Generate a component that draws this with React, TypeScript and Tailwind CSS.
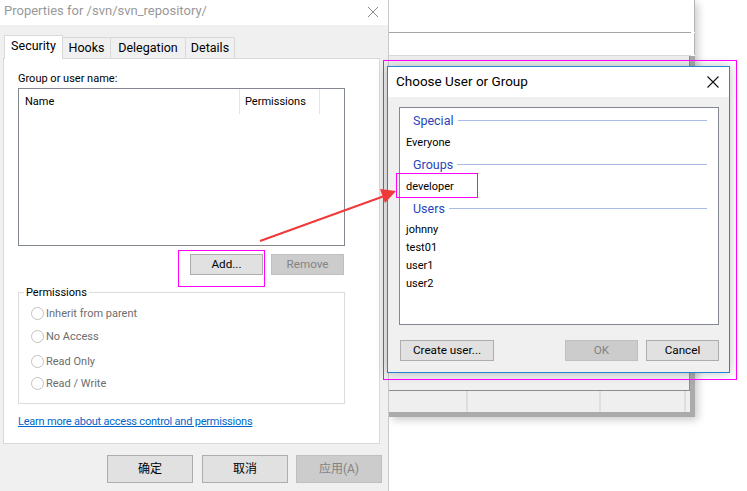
import React from "react";

const F = "font-['Roboto','Noto_Sans_CJK_SC',sans-serif]";

function WinButton({ label, w, h, disabled, cjk }: { label: string; w: string; h: string; disabled?: boolean; cjk?: boolean }) {
  return (
    <div
      className={`${w} ${h} flex items-center justify-center border ${cjk ? "text-[12px]" : "text-[11.7px] pt-px"} ${
        disabled ? "bg-[#cccccc] border-[#bfbfbf] text-[#838383]" : "bg-[#e1e1e1] border-[#adadad] text-black"
      }`}
    >
      {label}
    </div>
  );
}

function Radio({ label, cls }: { label: string; cls: string }) {
  return (
    <div className={`flex items-center h-[16px] ${cls}`}>
      <div className="w-[13px] h-[13px] rounded-full border border-[#c2c2c2] bg-white" />
      <span className="ml-[2px] text-[#6d6d6d] leading-[16px] pt-px">{label}</span>
    </div>
  );
}

function GroupHeader({ label }: { label: string }) {
  return (
    <div className="h-[22px] flex items-center pl-[13px] pr-[11px]">
      <span className="text-[#2745b8] text-[12.5px] leading-[16px] pt-px">{label}</span>
      <div className="flex-1 h-px bg-[#a8bce4] ml-[4px]" />
    </div>
  );
}

function Item({ label, h }: { label: string; h: string }) {
  return <div className={`${h} flex items-center pl-[6px] pt-[2px]`}>{label}</div>;
}

export default function App() {
  return (
    <div className={`relative w-[747px] h-[491px] bg-white overflow-hidden text-[11px] text-black ${F}`}>
      {/* Background window */}
      <div className="absolute left-[389px] top-0 w-[306px] h-[417px] flex flex-col shadow-[3px_3px_8px_rgba(0,0,0,0.2)]">
        <div className="h-[32px] bg-white border-r border-[#b5b5b5]" />
        <div className="h-px bg-[#a6a6a6] mr-[4px]" />
        <div className="h-[22px] bg-white border-r border-[#b5b5b5]" />
        <div className="h-px bg-[#d9d9d9] mr-[4px]" />
        <div className="flex-1 flex">
          <div className="flex-1 flex flex-col">
            <div className="flex-1 bg-[#f0f0f0] border-r border-[#8c8c8c]" />
            <div className="h-px bg-[#8c8c8c]" />
            <div className="h-[21px] bg-[#efefef] flex">
              <div className="w-[79px] border-r-2 border-[#dedede]" />
              <div className="w-[133px] border-r-2 border-[#dedede]" />
              <div className="w-[85px] border-r-2 border-[#dedede]" />
            </div>
          </div>
          <div className="w-[5px] bg-[#ababab]" />
        </div>
        <div className="h-[5px] bg-[#ababab]" />
      </div>

      {/* Left Properties window */}
      <div className="absolute left-0 top-0 w-[389px] h-[491px] bg-[#f0f0f0] border-r border-[#c8c8c8] flex flex-col">
        <div className="h-[25px] bg-white flex items-center justify-between pl-[4px] pr-[9px] pb-[4px]">
          <span className="text-[13px] text-[#999999] leading-[18px]">Properties for /svn/svn_repository/</span>
          <svg width="12" height="12" viewBox="0 0 12 12" className="mt-[3px]">
            <path d="M1 1L11 11M11 1L1 11" stroke="#8a8a8a" strokeWidth="1" />
          </svg>
        </div>
        <div className="pt-[10px] pl-[3px] pr-[8px]">
          <div className="h-[23px] flex pl-[1px] text-[12.5px]">
            <div className="relative z-10 self-start h-[24px] w-[59px] bg-white border-x border-t border-[#d9d9d9] flex items-center justify-center pb-[2px]">
              Security
            </div>
            <div className="self-end h-[21px] w-[48px] border-r border-t border-[#d9d9d9] flex items-center justify-center pt-px">
              Hooks
            </div>
            <div className="self-end h-[21px] w-[75px] border-r border-t border-[#d9d9d9] flex items-center justify-center pt-px">
              Delegation
            </div>
            <div className="self-end h-[21px] w-[49px] border-r border-t border-[#d9d9d9] flex items-center justify-center pt-px">
              Details
            </div>
          </div>
          <div className="h-[386px] bg-white border border-[#d9d9d9] pl-[14px] pt-[12px]">
            <div className="leading-[16px]">Group or user name:</div>
            <div className="mt-px w-[327px] h-[158px] border border-[#828790] bg-white">
              <div className="h-[25px] flex">
                <div className="w-[221px] border-r border-[#e5e5e5] flex items-center pl-[6px] pt-[2px]">Name</div>
                <div className="w-[80px] border-r border-[#e5e5e5] flex items-center pl-[5px] pt-[2px]">Permissions</div>
              </div>
            </div>
            <div className="w-[327px] mt-[8px] flex justify-end gap-[8px] pr-[1px]">
              <WinButton label="Add..." w="w-[73px]" h="h-[21px]" />
              <WinButton label="Remove" w="w-[73px]" h="h-[21px]" disabled />
            </div>
            <fieldset className="mt-[9px] w-[327px] h-[120px] border border-[#dcdcdc]">
              <legend className="ml-[5px] px-[2px] pt-[2px] leading-[14px]">Permissions</legend>
              <div className="pl-[12px]">
                <Radio label="Inherit from parent" cls="mt-[5px]" />
                <Radio label="No Access" cls="mt-[7px]" />
                <Radio label="Read Only" cls="mt-[9px]" />
                <Radio label="Read / Write" cls="mt-[6px]" />
              </div>
            </fieldset>
            <div className="mt-[10px] leading-[16px] text-[#0066cc] underline tracking-[-0.22px]">
              Learn more about access control and permissions
            </div>
          </div>
        </div>
        <div className="pt-[11px] flex justify-end pr-[6px]">
          <WinButton label="确定" w="w-[86px]" h="h-[28px]" cjk />
          <div className="w-[9px]" />
          <WinButton label="取消" w="w-[86px]" h="h-[28px]" cjk />
          <div className="w-[8px]" />
          <WinButton label="应用(A)" w="w-[86px]" h="h-[28px]" disabled cjk />
        </div>
      </div>

      {/* Choose User or Group dialog */}
      <div className="absolute left-[387px] top-[66px] w-[343px] h-[307px] border border-[#2584d6] bg-[#f0f0f0] flex flex-col shadow-[0_0_10px_rgba(0,0,0,0.25)]">
        <div className="h-[30px] bg-white flex items-center justify-between pl-[8px] pr-[10px] pb-[2px]">
          <span className="text-[13.5px] leading-[18px]">Choose User or Group</span>
          <svg width="12" height="12" viewBox="0 0 12 12" className="mt-[1px]">
            <path d="M0.5 0.5L11.5 11.5M11.5 0.5L0.5 11.5" stroke="#111" strokeWidth="1.1" />
          </svg>
        </div>
        <div className="pl-[11px] pt-[10px]">
          <div className="w-[320px] h-[218px] bg-white border border-[#828790] pt-px">
            <GroupHeader label="Special" />
            <Item label="Everyone" h="h-[22px]" />
            <GroupHeader label="Groups" />
            <Item label="developer" h="h-[22px]" />
            <GroupHeader label="Users" />
            <div className="mt-px">
              <Item label="johnny" h="h-[18px]" />
              <Item label="test01" h="h-[18px]" />
              <Item label="user1" h="h-[18px]" />
              <Item label="user2" h="h-[18px]" />
            </div>
          </div>
          <div className="mt-[15px] w-[320px] flex pl-[1px]">
            <WinButton label="Create user..." w="w-[94px]" h="h-[21px]" />
            <div className="flex-1" />
            <WinButton label="OK" w="w-[73px]" h="h-[21px]" disabled />
            <div className="w-[8px]" />
            <WinButton label="Cancel" w="w-[73px]" h="h-[21px]" />
          </div>
        </div>
      </div>

      {/* Annotations */}
      <div className="absolute left-[178px] top-[250px] w-[87px] h-[37px] border border-[#ff00ff]" />
      <div className="absolute left-[383px] top-[60px] w-[354px] h-[320px] border border-[#ff00ff]" />
      <div className="absolute left-[396px] top-[173px] w-[82px] h-[25px] border border-[#ff00ff]" />
      <svg className="absolute left-0 top-0 pointer-events-none" width="747" height="491" viewBox="0 0 747 491">
        <path d="M260 241 L383 196.5" stroke="#f03a3a" strokeWidth="2" />
        <polygon points="396,191 380,189 385,203" fill="#f03a3a" />
      </svg>
    </div>
  );
}
